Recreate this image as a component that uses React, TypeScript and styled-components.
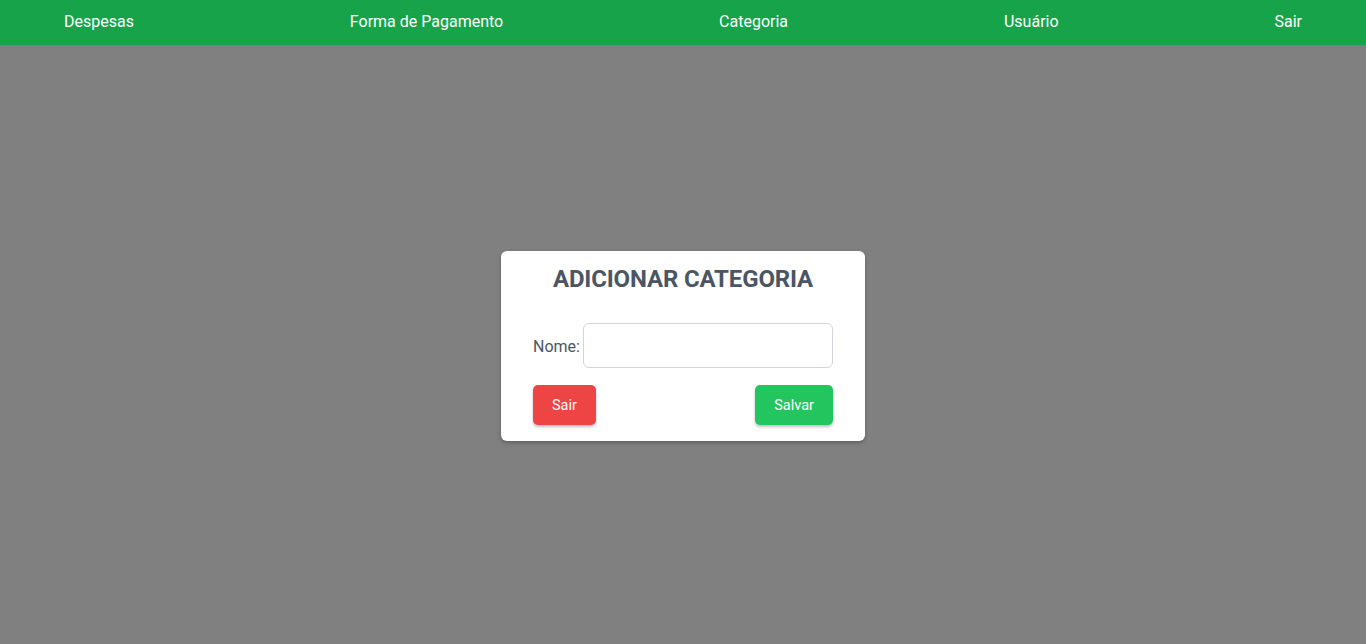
import React, { useState } from "react"
import styled, { createGlobalStyle } from "styled-components"

const GlobalStyle = createGlobalStyle`
	html,
	body {
		margin: 0;
		padding: 0;
		height: 100%;
	}
	body {
		font-family: Roboto, "Liberation Sans", Arial, sans-serif;
		background: #808080;
	}
	#root {
		height: 100%;
	}
`

const Page = styled.div`
	display: flex;
	flex-direction: column;
	height: 100vh;
	background: #808080;
`

const NavBar = styled.nav`
	display: flex;
	align-items: center;
	justify-content: space-between;
	height: 45px;
	padding: 0 64px;
	background: #16a34a;
	flex-shrink: 0;
`

const NavLink = styled.a`
	color: #ffffff;
	font-size: 16px;
	text-decoration: none;
	cursor: pointer;
	line-height: 20px;
	margin-bottom: 2px;
`

const Overlay = styled.main`
	flex: 1;
	display: flex;
	align-items: center;
	justify-content: center;
	padding-top: 3px;
`

const Modal = styled.div`
	width: 364px;
	box-sizing: border-box;
	background: #ffffff;
	border-radius: 6px;
	box-shadow: 0 2px 4px rgba(0, 0, 0, 0.25);
	padding: 14px 32px 16px;
	display: flex;
	flex-direction: column;
`

const Title = styled.h2`
	margin: 0;
	text-align: center;
	font-size: 24px;
	font-weight: 700;
	color: #4b5563;
	line-height: 28px;
	letter-spacing: -0.15px;
`

const FieldRow = styled.div`
	display: flex;
	align-items: center;
	gap: 3px;
	margin-top: 30px;
`

const Label = styled.label`
	font-size: 16px;
	color: #4b5563;
	padding-top: 2px;
`

const Input = styled.input`
	flex: 1;
	height: 45px;
	box-sizing: border-box;
	border: 1px solid #d1d5db;
	border-radius: 6px;
	padding: 0 10px;
	font-size: 16px;
	font-family: inherit;
	outline: none;
`

const Actions = styled.div`
	display: flex;
	justify-content: space-between;
	margin-top: 17px;
`

const Button = styled.button<{ $variant: "danger" | "success" }>`
	height: 40px;
	padding: 0 19px;
	border: none;
	border-radius: 5px;
	font-family: Roboto, "Liberation Sans", sans-serif;
	font-size: 14.5px;
	color: #ffffff;
	cursor: pointer;
	background: ${(p) => (p.$variant === "danger" ? "#ef4444" : "#22c55e")};
	box-shadow: 0 2px 3px rgba(0, 0, 0, 0.25);
`

export default function App() {
	const [nome, setNome] = useState("")

	return (
		<>
			<GlobalStyle />
			<Page>
				<NavBar>
					<NavLink>Despesas</NavLink>
					<NavLink>Forma de Pagamento</NavLink>
					<NavLink>Categoria</NavLink>
					<NavLink>Usuário</NavLink>
					<NavLink>Sair</NavLink>
				</NavBar>
				<Overlay>
					<Modal>
						<Title>ADICIONAR CATEGORIA</Title>
						<FieldRow>
							<Label htmlFor="nome">Nome:</Label>
							<Input id="nome" value={nome} onChange={(e) => setNome(e.target.value)} />
						</FieldRow>
						<Actions>
							<Button $variant="danger">Sair</Button>
							<Button $variant="success">Salvar</Button>
						</Actions>
					</Modal>
				</Overlay>
			</Page>
		</>
	)
}
